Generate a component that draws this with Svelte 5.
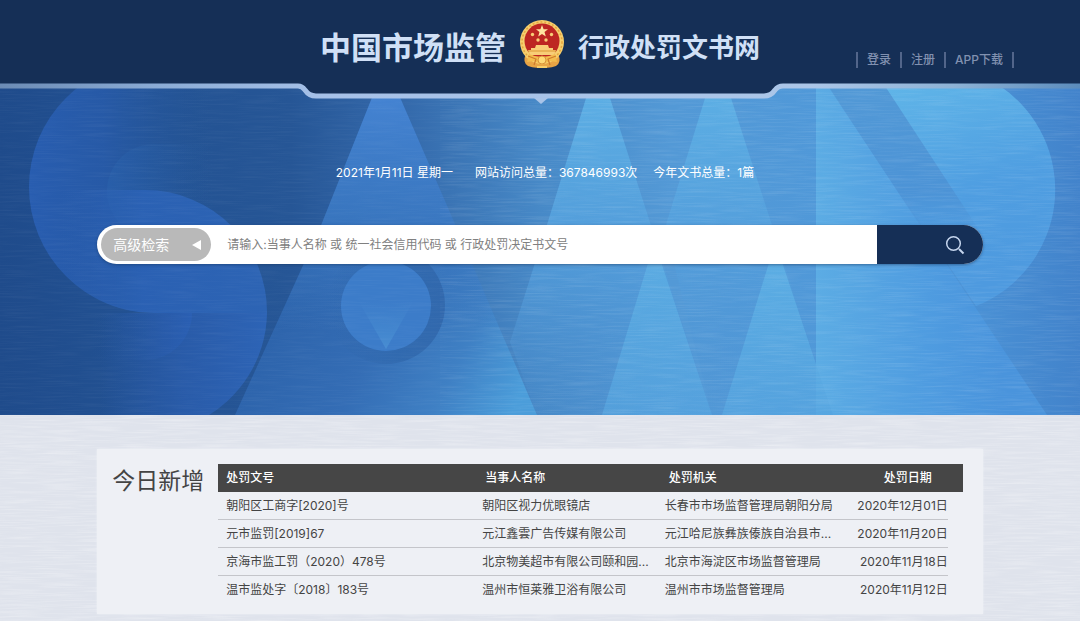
<script lang="ts">
  type Doc = { no: string; party: string; office: string; date: string };

  let keyword: string = "";
  let today: string = "2021年1月11日 星期一";
  let visits: number = 367846993;
  let yearTotal: number = 1;

  let links: string[] = ["登录", "注册", "APP下载"];
  let docs: Doc[] = [
    {
      no: "朝阳区工商字[2020]号",
      party: "朝阳区视力优眼镜店",
      office: "长春市市场监督管理局朝阳分局",
      date: "2020年12月01日",
    },
    {
      no: "元市监罚[2019]67",
      party: "元江鑫雲广告传媒有限公司",
      office: "元江哈尼族彝族傣族自治县市...",
      date: "2020年11月20日",
    },
    {
      no: "京海市监工罚（2020）478号",
      party: "北京物美超市有限公司颐和园...",
      office: "北京市海淀区市场监督管理局",
      date: "2020年11月18日",
    },
    {
      no: "温市监处字〔2018〕183号",
      party: "温州市恒莱雅卫浴有限公司",
      office: "温州市市场监督管理局",
      date: "2020年11月12日",
    },
  ];
</script>

<div class="top">
  <svg class="backdrop" viewBox="0 0 1080 415" preserveAspectRatio="xMidYMid slice" aria-hidden="true">
    <defs>
      <linearGradient id="sky">
        <stop offset="0" stop-color="#1f4b8b" />
        <stop offset=".12" stop-color="#225192" />
        <stop offset=".27" stop-color="#265696" />
        <stop offset=".37" stop-color="#3368aa" />
        <stop offset=".5" stop-color="#4789c7" />
        <stop offset=".62" stop-color="#5399d6" />
        <stop offset=".85" stop-color="#4e98da" />
        <stop offset="1" stop-color="#4283cb" />
      </linearGradient>
      <linearGradient id="sTop" gradientUnits="userSpaceOnUse" x1="29" y1="0" x2="215" y2="0">
        <stop offset="0" stop-color="#285db0" />
        <stop offset=".4" stop-color="#285cac" stop-opacity=".8" />
        <stop offset="1" stop-color="#265899" stop-opacity="0" />
      </linearGradient>
      <linearGradient id="hole" gradientUnits="userSpaceOnUse" x1="104" y1="0" x2="215" y2="0">
        <stop offset="0" stop-color="#2960ab" stop-opacity=".8" />
        <stop offset="1" stop-color="#255799" stop-opacity="0" />
      </linearGradient>
      <linearGradient id="sMid" gradientUnits="userSpaceOnUse" x1="60" y1="0" x2="267" y2="0">
        <stop offset="0" stop-color="#2a60b4" stop-opacity="0" />
        <stop offset=".4" stop-color="#2b62b6" stop-opacity=".9" />
        <stop offset="1" stop-color="#2d64b4" />
      </linearGradient>
      <linearGradient id="sLow" gradientUnits="userSpaceOnUse" x1="100" y1="0" x2="267" y2="0">
        <stop offset="0" stop-color="#2a5cae" stop-opacity="0" />
        <stop offset=".5" stop-color="#2a5dae" stop-opacity=".8" />
        <stop offset="1" stop-color="#2d64b6" />
      </linearGradient>
      <linearGradient id="holeLow" gradientUnits="userSpaceOnUse" x1="90" y1="0" x2="192" y2="0">
        <stop offset="0" stop-color="#24559c" stop-opacity="0" />
        <stop offset="1" stop-color="#2b61b9" />
      </linearGradient>
      <linearGradient id="aFill" gradientUnits="userSpaceOnUse" x1="260" y1="290" x2="510" y2="415">
        <stop offset="0" stop-color="#2b61a9" />
        <stop offset=".45" stop-color="#346db5" />
        <stop offset=".75" stop-color="#3f80c4" />
        <stop offset="1" stop-color="#4b9dda" />
      </linearGradient>
      <linearGradient id="aTop" gradientUnits="userSpaceOnUse" x1="0" y1="95" x2="0" y2="330">
        <stop offset="0" stop-color="#4483d2" />
        <stop offset=".5" stop-color="#3d7cc6" stop-opacity=".75" />
        <stop offset="1" stop-color="#3a78c0" stop-opacity="0" />
      </linearGradient>
      <linearGradient id="ring">
        <stop offset="0" stop-color="#2f67ad" stop-opacity="0" />
        <stop offset=".6" stop-color="#2e66ab" stop-opacity=".7" />
        <stop offset="1" stop-color="#3168ad" />
      </linearGradient>
      <linearGradient id="tip" x1="0" y1="0" x2="0" y2="1">
        <stop offset="0" stop-color="#4b92d4" stop-opacity="0" />
        <stop offset="1" stop-color="#4f98d8" />
      </linearGradient>
      <linearGradient id="peak" x1="0" y1="0" x2="0" y2="1">
        <stop offset="0" stop-color="#5eb2e6" />
        <stop offset="1" stop-color="#56a5e0" />
      </linearGradient>
      <linearGradient id="mFall" x1="0" y1="0" x2="0" y2="1">
        <stop offset="0" stop-color="#5caee4" />
        <stop offset=".45" stop-color="#549fdc" stop-opacity=".9" />
        <stop offset="1" stop-color="#4a8fd1" stop-opacity=".1" />
      </linearGradient>
      <linearGradient id="stem" gradientUnits="userSpaceOnUse" x1="816" y1="0" x2="1000" y2="0">
        <stop offset="0" stop-color="#5cace4" />
        <stop offset=".6" stop-color="#4f9ce0" />
        <stop offset="1" stop-color="#4a94dc" />
      </linearGradient>
      <linearGradient id="bowl" x1="0" y1="0" x2=".3" y2="1">
        <stop offset="0" stop-color="#62b8e9" />
        <stop offset=".6" stop-color="#4f9ee1" />
        <stop offset="1" stop-color="#4e9adf" />
      </linearGradient>
      <linearGradient id="fold" x1="0" y1="0" x2="0" y2="1">
        <stop offset="0" stop-color="#5299d6" />
        <stop offset=".6" stop-color="#4c93d6" />
        <stop offset="1" stop-color="#4f9be0" stop-opacity="0" />
      </linearGradient>
      <linearGradient id="rim">
        <stop offset="0" stop-color="#6b8bb4" />
        <stop offset=".15" stop-color="#8bacd6" />
        <stop offset=".3" stop-color="#a6c1e8" />
        <stop offset=".75" stop-color="#abc6e8" />
        <stop offset=".88" stop-color="#8eb3d6" />
        <stop offset="1" stop-color="#5a8bbb" />
      </linearGradient>
      <filter id="brushed" x="0" y="0" width="100%" height="100%">
        <feTurbulence type="fractalNoise" baseFrequency=".025 .6" numOctaves="2" seed="4" />
        <feColorMatrix values="0 0 0 0 1  0 0 0 0 1  0 0 0 0 1  1.2 0 0 0 -.5" />
      </filter>
    </defs>

    <rect width="1080" height="415" fill="url(#sky)" />

    <!-- S -->
    <path d="M155 61A126 126 0 0 0 155 313H215V61Z" fill="url(#sTop)" />
    <path d="M220 144H154A47 47 0 0 0 154 238H220Z" fill="url(#hole)" />
    <path d="M55 190H145A122 122 0 0 1 267 313H155A126 126 0 0 1 55 264Z" fill="url(#sMid)" />
    <path d="M90 313H267A122 122 0 0 1 200 420H90Z" fill="url(#sLow)" />
    <path d="M90 313H192A47 47 0 0 1 145 360H90Z" fill="url(#holeLow)" opacity=".6" />

    <!-- A -->
    <path d="M373 95H399L537 415H235L320 228Z" fill="url(#aFill)" />
    <path d="M373 95H399L501 330H274L320 228Z" fill="url(#aTop)" />
    <circle cx="386" cy="305" r="59" fill="url(#ring)" />
    <circle cx="386" cy="306" r="45" fill="#3c7cc9" />
    <path d="M358 300L386 349L414 300Z" fill="url(#tip)" opacity=".6" />

    <!-- R -->
    <path d="M816 86H828L1047 415H816Z" fill="url(#stem)" />
    <path d="M828 86H1000A125 125 0 0 1 976 306Z" fill="url(#bowl)" />
    <path d="M828 86H885L1000 262H944Z" fill="url(#fold)" />

    <!-- M -->
    <path d="M587 95H609L712 415H537L510 342L546 228Z" fill="url(#mFall)" />
    <path d="M706 95H730L816 362V415H712L665 228Z" fill="url(#mFall)" />
    <path d="M652 250H657L712 415H602Z" fill="url(#peak)" opacity=".7" />
    <path d="M773 250H778L833 415H722Z" fill="url(#peak)" opacity=".8" />

    <rect width="1080" height="415" filter="url(#brushed)" opacity=".07" />
    <rect x="440" width="640" height="415" filter="url(#brushed)" opacity=".1" />

    <path
      d="M0 0H1080V86H783Q778 86 775 90Q771 96 764 96H316Q309 96 305 90Q302 86 298 86H0Z"
      fill="#152f56"
    />
    <path
      d="M-3 86H298Q302 86 305 90Q309 96 316 96H764Q771 96 775 90Q778 86 783 86H1083"
      fill="none"
      stroke="url(#rim)"
      stroke-width="5"
    />
    <path d="M534 98H548L541 104Z" fill="#a9c4e8" />
  </svg>

  <header>
    <h1>
      <span class="name">中国市场监管</span>
      <svg class="emblem" viewBox="0 0 46 50" aria-hidden="true">
        <path d="M7 35Q3 43 9 47Q16 50 23 48Q30 50 37 47Q43 43 39 35Z" fill="#e8a445" />
        <circle cx="23" cy="23" r="22" fill="#f6cf6d" />
        <circle cx="23" cy="23" r="20" fill="none" stroke="#e5a440" stroke-width="1.500" stroke-dasharray="2 2" />
        <circle cx="23" cy="22" r="17.500" fill="#bd2622" />
        <path d="M23 6L24.600 10.300H29L25.500 13L26.800 17.400L23 14.900L19.200 17.400L20.500 13L17 10.300H21.400Z" fill="#ffe5a0" />
        <g fill="#f8ce77">
          <circle cx="13.500" cy="15.500" r="1.700" />
          <circle cx="32.500" cy="15.500" r="1.700" />
          <circle cx="19" cy="21" r="1.700" />
          <circle cx="27" cy="21" r="1.700" />
          <path d="M17 26H29L30 29H34V31H37L35 36H11L9 31H12V29H16Z" />
        </g>
        <path d="M9 32H37" stroke="#dc9735" />
        <path d="M10 35Q23 41 36 35L38 43L30 42L23 46L16 42L8 43Z" fill="#f3bd4e" />
        <path d="M9 37L17 40L15 46M37 37L29 40L31 46" fill="none" stroke="#cf7a2c" stroke-width="1.200" />
        <circle cx="23" cy="41" r="4" fill="#ffd975" stroke="#d9923a" />
        <path d="M18 48H28" stroke="#f7ce6a" stroke-width="2" />
      </svg>
      <span class="name long">行政处罚文书网</span>
    </h1>
    <nav>
      {#each links as link}
        <a href="#top">{link}</a>
      {/each}
    </nav>
  </header>

  <p class="stats">
    <span class="day">{today}</span>
    <span>网站访问总量：{visits}次</span>
    <span>今年文书总量：{yearTotal}篇</span>
  </p>

  <form class="search" on:submit|preventDefault>
    <button type="button" class="advanced">
      高级检索
      <svg viewBox="0 0 10 10" aria-hidden="true"><path d="M0 5L9 0V10Z" fill="#fff" /></svg>
    </button>
    <input
      type="text"
      aria-label="检索"
      placeholder="请输入:当事人名称 或 统一社会信用代码 或 行政处罚决定书文号"
      bind:value={keyword}
    />
    <button type="submit" class="go" aria-label="搜索">
      <svg viewBox="0 0 20 20" fill="none" stroke="#c6d6ee" aria-hidden="true">
        <circle cx="8.500" cy="8.500" r="6.800" stroke-width="1.500" />
        <path d="M14 14L18.500 18.500" stroke-width="2" />
      </svg>
    </button>
  </form>
</div>

<main>
  <svg class="grain" aria-hidden="true">
    <rect width="100%" height="100%" filter="url(#brushed)" />
  </svg>
  <section>
    <h2>今日新增</h2>
    <table>
      <thead>
        <tr>
          <th class="no">处罚文号</th>
          <th class="party">当事人名称</th>
          <th class="office">处罚机关</th>
          <th class="date">处罚日期</th>
        </tr>
      </thead>
      <tbody>
        {#each docs as doc}
          <tr>
            <td>{doc.no}</td>
            <td>{doc.party}</td>
            <td>{doc.office}</td>
            <td class="date">{doc.date}</td>
          </tr>
        {/each}
      </tbody>
    </table>
  </section>
</main>

<style>
  :global(body) {
    margin: 0;
    background: #e2e6ee;
    font-family: Inter, "Noto Sans CJK SC", sans-serif;
    font-size: 12px;
    color: #444;
  }
  .top {
    position: relative;
    padding-bottom: 151px;
    overflow: hidden;
  }
  .backdrop {
    position: absolute;
    inset: 0;
    width: 100%;
    height: 100%;
    z-index: -1;
  }
  header {
    display: grid;
    grid-template-columns: 1fr auto 1fr;
    align-items: center;
    height: 96px;
  }
  h1 {
    grid-column: 2;
    display: flex;
    align-items: center;
    gap: 13px;
    margin: 0;
    color: #d0e0f6;
    font-size: 31px;
    line-height: 50px;
    white-space: nowrap;
  }
  .name {
    font-weight: 700;
  }
  .name.long {
    font-size: 26px;
  }
  .emblem {
    width: 46px;
    height: 50px;
    margin-top: -8px;
  }
  nav {
    display: flex;
    justify-self: end;
    margin: 24px 66px 0 0;
    border-left: 2px solid #52658a;
  }
  nav a {
    padding: 0 9px;
    border-right: 2px solid #52658a;
    color: #8191b0;
    font-weight: 500;
    line-height: 16px;
    text-decoration: none;
    white-space: nowrap;
  }
  .stats {
    display: flex;
    justify-content: center;
    gap: 16px;
    margin: 67px 0 43px;
    padding-left: 10px;
    color: #fff;
    line-height: 19px;
  }
  .day {
    margin-right: 6px;
  }
  .search {
    display: flex;
    width: 82%;
    height: 39px;
    margin: 0 auto;
    border-radius: 20px;
    background: #fff;
    overflow: hidden;
    box-shadow: 0 1px 3px rgba(20, 50, 90, 0.5);
  }
  button,
  input {
    border: 0;
    font-family: inherit;
  }
  .advanced {
    display: flex;
    align-items: center;
    justify-content: space-between;
    width: 110px;
    margin: 3px 4px;
    padding: 0 9px 0 12px;
    border-radius: 17px;
    background: #b9b9b9;
    color: #fff;
    font-size: 14px;
    line-height: 16px;
  }
  .advanced svg {
    width: 10px;
    height: 10px;
  }
  input {
    flex: 1;
    min-width: 0;
    padding: 0 12px;
    background: #fff;
    color: #444;
    font-size: 12px;
    outline: none;
  }
  input::placeholder {
    color: #808080;
  }
  .go {
    width: 106px;
    padding: 0 18px 0 0;
    background: #152f56;
    text-align: right;
  }
  .go svg {
    width: 20px;
    height: 20px;
    vertical-align: middle;
  }
  main {
    position: relative;
    padding: 34px 0 8px;
    background: #dfe3ec;
  }
  .grain {
    position: absolute;
    inset: 0;
    width: 100%;
    height: 100%;
    opacity: 0.5;
  }
  section {
    position: relative;
    display: flex;
    align-items: flex-start;
    box-sizing: border-box;
    width: 82%;
    margin: 0 auto;
    padding: 15px 20px 10px 15px;
    background: #eef0f5;
    box-shadow: 0 0 2px #eef1f5;
  }
  h2 {
    flex: none;
    margin: 0 14px 0 0;
    font-size: 23px;
    font-weight: 400;
    line-height: 34px;
  }
  table {
    flex: 1;
    min-width: 0;
    border-collapse: collapse;
  }
  th,
  td {
    height: 28px;
    box-sizing: border-box;
    padding: 0 8px;
    line-height: 20px;
    text-align: left;
    white-space: nowrap;
  }
  th {
    background: #464646;
    color: #fff;
    font-weight: 500;
  }
  .no {
    width: 34.4%;
  }
  .party {
    width: 24.5%;
    padding-left: 11px;
  }
  .office {
    width: 24%;
    padding-left: 12px;
  }
  td.date {
    padding-right: 15px;
    text-align: right;
  }
  th.date {
    padding-right: 31px;
    text-align: right;
  }
  tbody tr:not(:last-child) {
    background: linear-gradient(#c4c5ca, #c4c5ca) left bottom / calc(100% - 15px) 1px no-repeat;
  }
</style>
